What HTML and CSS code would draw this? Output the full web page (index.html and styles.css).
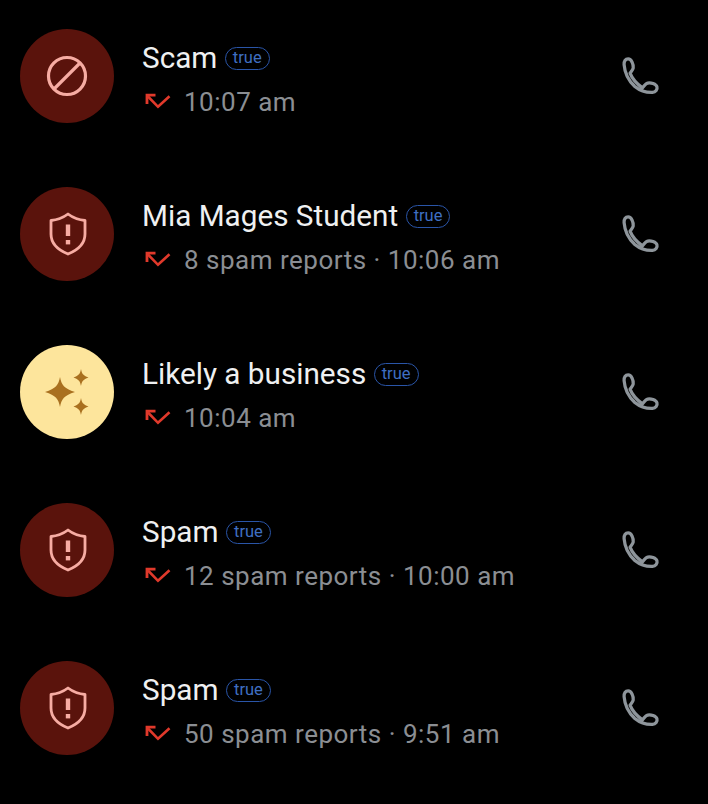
FILE: index.html
```html
<!DOCTYPE html>
<html lang="en">
<head>
<meta charset="utf-8">
<title>Calls</title>
<link rel="stylesheet" href="styles.css">
</head>
<body>
<svg class="defs" width="0" height="0" aria-hidden="true">
  <defs>
    <symbol id="missed" viewBox="0 0 26 18">
      <path d="M3 3.500 L13 13.800 L24.500 3.200" fill="none" stroke-width="2.6"/>
      <path d="M2 11 V2.200 H10.500" fill="none" stroke-width="2.8"/>
    </symbol>
    <symbol id="phone" viewBox="0 0 40 40">
      <path d="M6.500 2 C3.500 2 2 4.500 2.200 8 C2.800 16 7 25 13.500 31 C19 35.500 26 37.500 32 37.300 C35.500 37 37.500 34 36.800 31.500 C36 28.500 30 26.500 27 27.500 C25 28 23.500 30 21.500 32.500 C16 28.500 10.500 22.500 8.500 17 C9.500 15.500 11.500 13.500 11.800 11.500 C12.300 8 10 2 6.500 2 Z" fill="none" stroke-width="3.400" stroke-linejoin="round"/>
    </symbol>
    <symbol id="shield" viewBox="0 0 40 44">
      <path d="M20 2 C24 5 30 8 37 8.500 V22 C37 31 30 38 20 42 C10 38 3 31 3 22 V8.500 C10 8 16 5 20 2 Z" fill="none" stroke-width="2.800" stroke-linejoin="round"/>
      <path d="M20 12.500 V24" fill="none" stroke-width="4.400"/>
      <rect x="17.800" y="28" width="4.400" height="4.400" stroke="none" fill="currentColor"/>
    </symbol>
    <symbol id="block" viewBox="0 0 44 44">
      <circle cx="22" cy="22" r="18.500" fill="none" stroke-width="3.200"/>
      <path d="M9 35 L35 9" fill="none" stroke-width="3.200"/>
    </symbol>
    <symbol id="sparkle" viewBox="0 0 44 46">
      <path d="M15 8 C16.500 16 19 19.500 30 23 C19 26.500 16.500 30 15 38 C13.500 30 11 26.500 0 23 C11 19.500 13.500 16 15 8 Z" stroke="none" fill="currentColor"/>
      <path d="M36 0 C36.800 4.500 38 6.500 43.500 8.500 C38 10.500 36.800 12.500 36 17 C35.200 12.500 34 10.500 28.500 8.500 C34 6.500 35.200 4.500 36 0 Z" stroke="none" fill="currentColor"/>
      <path d="M36 29 C36.800 33.500 38 35.500 43.500 37.500 C38 39.500 36.800 41.500 36 46 C35.200 41.500 34 39.500 28.500 37.500 C34 35.500 35.200 33.500 36 29 Z" stroke="none" fill="currentColor"/>
    </symbol>
  </defs>
</svg>
<ul class="list">
  <li class="row">
    <div class="avatar avatar-red"><svg class="icon-block"><use href="#block"/></svg></div>
    <div class="body">
      <div class="title"><span class="name">Scam</span><span class="tag">true</span></div>
      <div class="meta"><svg class="missed"><use href="#missed"/></svg><span>10:07 am</span></div>
    </div>
    <svg class="phone"><use href="#phone"/></svg>
  </li>
  <li class="row">
    <div class="avatar avatar-red"><svg class="icon-shield"><use href="#shield"/></svg></div>
    <div class="body">
      <div class="title"><span class="name">Mia Mages Student</span><span class="tag">true</span></div>
      <div class="meta"><svg class="missed"><use href="#missed"/></svg><span>8 spam reports · 10:06 am</span></div>
    </div>
    <svg class="phone"><use href="#phone"/></svg>
  </li>
  <li class="row">
    <div class="avatar avatar-yellow"><svg class="icon-sparkle"><use href="#sparkle"/></svg></div>
    <div class="body">
      <div class="title"><span class="name">Likely a business</span><span class="tag">true</span></div>
      <div class="meta"><svg class="missed"><use href="#missed"/></svg><span>10:04 am</span></div>
    </div>
    <svg class="phone"><use href="#phone"/></svg>
  </li>
  <li class="row">
    <div class="avatar avatar-red"><svg class="icon-shield"><use href="#shield"/></svg></div>
    <div class="body">
      <div class="title"><span class="name">Spam</span><span class="tag">true</span></div>
      <div class="meta"><svg class="missed"><use href="#missed"/></svg><span>12 spam reports · 10:00 am</span></div>
    </div>
    <svg class="phone"><use href="#phone"/></svg>
  </li>
  <li class="row">
    <div class="avatar avatar-red"><svg class="icon-shield"><use href="#shield"/></svg></div>
    <div class="body">
      <div class="title"><span class="name">Spam</span><span class="tag">true</span></div>
      <div class="meta"><svg class="missed"><use href="#missed"/></svg><span>50 spam reports · 9:51 am</span></div>
    </div>
    <svg class="phone"><use href="#phone"/></svg>
  </li>
</ul>
</body>
</html>
```

FILE: styles.css
```css
html, body { margin: 0; padding: 0; background: #000; height: 804px; overflow: hidden; }
body { font-family: Roboto, "Liberation Sans", sans-serif; }
.defs { display: block; height: 0; }
.list { list-style: none; margin: 0; padding: 29px 0 0 20px; display: flex; flex-direction: column; gap: 64px; }
.row { display: flex; align-items: center; height: 94px; }
.avatar { width: 94px; height: 94px; border-radius: 50%; display: flex; align-items: center; justify-content: center; flex: none; }
.avatar-red { background: #5a130c; color: #f7aca3; }
.avatar-yellow { background: #fde59c; color: #a9701f; }
.icon-block { width: 44px; height: 44px; stroke: #f7aca3; }
.icon-shield { width: 40px; height: 44px; stroke: #f7aca3; margin-left: 1px; }
.icon-sparkle { width: 44px; height: 46px; margin-left: -1px; }
.body { margin-left: 28px; flex: 1; display: flex; flex-direction: column; gap: 11px; padding-top: 6px; }
.title { display: flex; align-items: center; height: 34px; }
.name { font-size: 29.7px; color: #eff0f1; line-height: 34px; margin-top: 1px; }
.tag { margin-left: 7.5px; margin-top: 1px; height: 23px; line-height: 20px; padding: 0 7px; box-sizing: border-box; border: 1.5px solid #2a55a8; border-radius: 12px; font-size: 16.5px; color: #3f6fc2; }
.meta { display: flex; align-items: center; font-size: 26px; line-height: 32px; color: #8b8e93; letter-spacing: 0.5px; height: 32px; }
.missed { width: 26px; height: 18px; stroke: #e0392b; margin-left: 2.5px; margin-right: 13.5px; margin-top: 1px; flex: none; }
.phone { width: 38px; height: 38px; stroke: #8e959b; margin-right: 48px; flex: none; }
```
